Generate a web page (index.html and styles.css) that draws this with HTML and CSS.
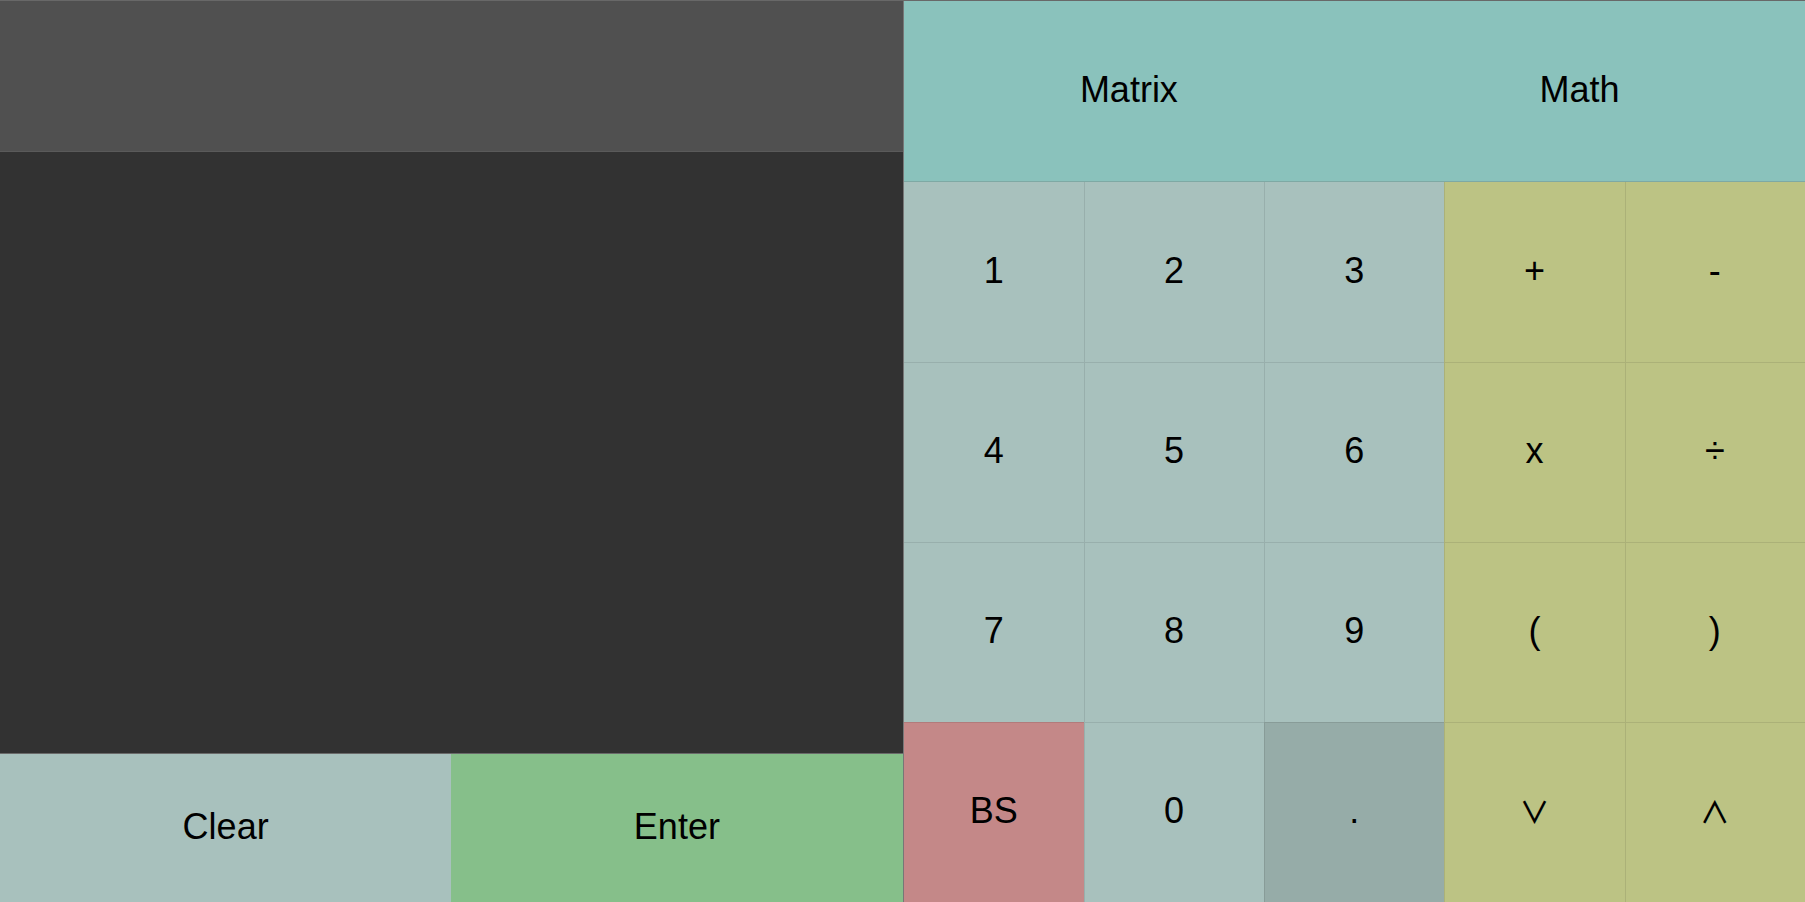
FILE: index.html
```html
<!DOCTYPE html>
<html>
<head>
<meta charset="utf-8">
<link rel="stylesheet" href="styles.css">
</head>
<body>
<div class="app">
  <div class="left">
    <div class="display"></div>
    <div class="screen"></div>
    <div class="actions">
      <div class="btn clear">Clear</div>
      <div class="btn enter">Enter</div>
    </div>
  </div>
  <div class="right">
    <div class="tabs">
      <div class="btn tab">Matrix</div>
      <div class="btn tab">Math</div>
    </div>
    <div class="keys">
      <div class="key num">1</div>
      <div class="key num">2</div>
      <div class="key num">3</div>
      <div class="key op">+</div>
      <div class="key op">-</div>
      <div class="key num">4</div>
      <div class="key num">5</div>
      <div class="key num">6</div>
      <div class="key op">x</div>
      <div class="key op">÷</div>
      <div class="key num">7</div>
      <div class="key num">8</div>
      <div class="key num">9</div>
      <div class="key op">(</div>
      <div class="key op">)</div>
      <div class="key bs">BS</div>
      <div class="key num">0</div>
      <div class="key dot">.</div>
      <div class="key op logic">∨</div>
      <div class="key op logic">∧</div>
    </div>
  </div>
</div>
</body>
</html>
```

FILE: styles.css
```css
html, body {
  margin: 0;
  padding: 0;
  height: 100%;
  overflow: hidden;
}
body {
  font-family: "Liberation Sans", Arial, sans-serif;
  font-size: 36px;
  color: #000;
}
.app {
  display: grid;
  grid-template-columns: 1fr 1fr;
  height: 902px;
  box-sizing: border-box;
  border-top: 1px solid #686868;
}
.left {
  display: flex;
  flex-direction: column;
  min-height: 0;
}
.display {
  height: 150px;
  background: #505050;
  border-bottom: 1px solid #5a5a5a;
}
.screen {
  flex: 1;
  background: #323232;
  border-bottom: 1px solid #6a6a6a;
}
.actions {
  height: 148px;
  display: grid;
  grid-template-columns: 1fr 1fr;
}
.btn {
  display: flex;
  align-items: center;
  justify-content: center;
  padding-bottom: 2px;
}
.clear { background: #a8c1bd; }
.enter { background: #86bf8a; }
.right {
  display: flex;
  flex-direction: column;
  border-left: 1px solid #777;
  min-height: 0;
}
.tabs {
  height: 180px;
  display: grid;
  grid-template-columns: 1fr 1fr;
  background: #8ac2bc;
  border-bottom: 1px solid #7ea9a4;
}
.keys {
  flex: 1;
  display: grid;
  grid-template-columns: repeat(5, 1fr);
  grid-template-rows: repeat(4, 1fr);
}
.key {
  display: flex;
  align-items: center;
  justify-content: center;
  padding-bottom: 2px;
  box-shadow: inset 1px 1px 0 rgba(0, 0, 0, 0.09);
}
.keys .key:nth-child(-n+5) { box-shadow: inset 1px 0 0 rgba(0, 0, 0, 0.09); }
.keys .key:nth-child(5n+1) { box-shadow: inset 0 1px 0 rgba(0, 0, 0, 0.09); }
.keys .key:nth-child(1) { box-shadow: none; }
.num { background: #a8c1bd; }
.op { background: #bcc384; }
.bs { background: #c48888; }
.dot { background: #96aca8; }
.logic {
  font-family: "Noto Sans CJK JP", sans-serif;
  font-size: 30px;
  font-weight: 500;
  padding-bottom: 4px;
}
```
